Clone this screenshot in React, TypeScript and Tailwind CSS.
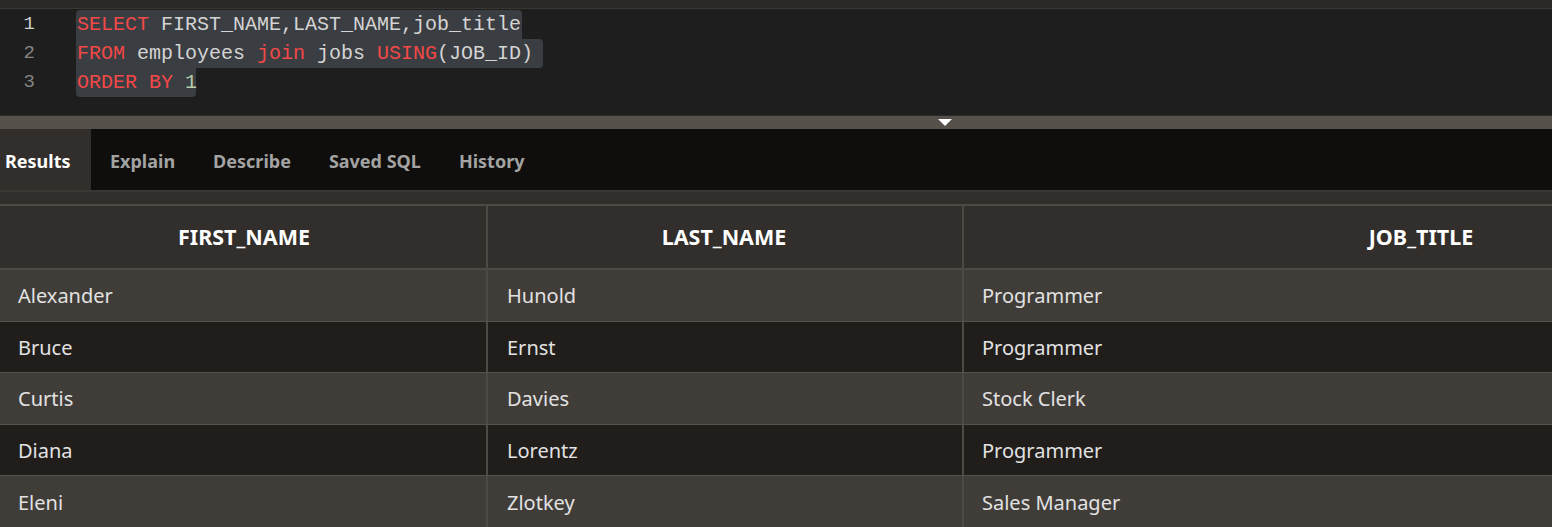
const rows = [
  ['Alexander', 'Hunold', 'Programmer'],
  ['Bruce', 'Ernst', 'Programmer'],
  ['Curtis', 'Davies', 'Stock Clerk'],
  ['Diana', 'Lorentz', 'Programmer'],
  ['Eleni', 'Zlotkey', 'Sales Manager'],
]

const kw = 'text-[#f34848]'
const id = 'text-[#d4d4d4]'

function CodeLine({ n, active, width, round, children }: { n: number; active?: boolean; width: string; round: string; children: React.ReactNode }) {
  return (
    <div className="flex h-[29px] items-stretch">
      <div className="w-[76px] shrink-0">
        <div className={`w-[35px] text-right text-[19px] leading-[29px] ${active ? 'text-[#cfcfcf]' : 'text-[#858585]'}`}>{n}</div>
      </div>
      <div className={`bg-[#3a3d41] pl-[1px] leading-[29px] whitespace-pre ${width} ${round}`}>{children}</div>
    </div>
  )
}

export default function App() {
  return (
    <div className="flex h-[527px] w-[1552px] flex-col overflow-hidden bg-[#1e1e1e] font-['Noto_Sans',sans-serif]">
      {/* top strip */}
      <div className="h-[9px] shrink-0 border-b border-[#3b3834] bg-[#2b2825]" />

      {/* editor */}
      <div className="h-[106px] shrink-0 bg-[#1e1e1e] pt-[1px] font-['Liberation_Mono',monospace] text-[20px]">
        <CodeLine n={1} active width="w-[446px]" round="rounded-t-[4px]">
          <span className={kw}>SELECT</span>
          <span className={id}> FIRST_NAME,LAST_NAME,job_title</span>
        </CodeLine>
        <CodeLine n={2} width="w-[467px]" round="rounded-tr-[4px] rounded-br-[4px]">
          <span className={kw}>FROM</span>
          <span className={id}> employees </span>
          <span className={kw}>join</span>
          <span className={id}> jobs </span>
          <span className={kw}>USING</span>
          <span className={id}>(JOB_ID)</span>
        </CodeLine>
        <CodeLine n={3} width="w-[120px]" round="rounded-b-[4px]">
          <span className={kw}>ORDER BY</span>
          <span className={id}> </span>
          <span className="text-[#b5cea8]">1</span>
        </CodeLine>
      </div>

      {/* splitter */}
      <div className="flex h-[14px] shrink-0 justify-center border-t border-[#2e2c29] bg-[#555049]">
        <div className="ml-[338px] mt-[3px] h-0 w-0 border-x-[7px] border-t-[7px] border-x-transparent border-t-white" />
      </div>

      {/* tabs */}
      <div className="flex h-[61px] shrink-0 items-stretch gap-[38px] bg-[#0f0e0d] text-[18px] font-bold">
        <div className="flex w-[91px] items-center bg-[#312e2b] pl-[5px] pt-[3px] text-white">Results</div>
        <div className="-ml-[19px] flex items-center pt-[3px] text-[#a3a3a3]">Explain</div>
        <div className="flex items-center pt-[3px] text-[#a3a3a3]">Describe</div>
        <div className="flex items-center pt-[3px] text-[#a3a3a3]">Saved SQL</div>
        <div className="flex items-center pt-[3px] text-[#a3a3a3]">History</div>
      </div>

      {/* results grid */}
      <div className="flex-1 overflow-hidden border-t-2 border-[#3a3733] bg-[#312e2b] pt-[12px]">
        <div className="w-[1878px] border-t-2 border-[#4d4944]">
          <div className="flex h-[64px] border-b-2 border-[#4d4944] bg-[#312e2b] text-[21.5px] font-bold text-white">
            <div className="flex w-[488px] items-center justify-center border-r-2 border-[#4d4944] pl-[2px]">FIRST_NAME</div>
            <div className="flex w-[476px] items-center justify-center border-r-2 border-[#4d4944] pr-[2px]">LAST_NAME</div>
            <div className="flex w-[914px] items-center justify-center">JOB_TITLE</div>
          </div>
          {rows.map((r, i) => (
            <div
              key={r[0]}
              className={`flex h-[51.6px] border-b border-[#55514b] text-[20px] text-[#e2e2e2] ${i % 2 === 0 ? 'bg-[#403d39]' : 'bg-[#201d1b]'}`}
            >
              <div className="flex w-[488px] items-center border-r-2 border-[#4d4944] pl-[18px] pt-[2px]">{r[0]}</div>
              <div className="flex w-[476px] items-center border-r-2 border-[#4d4944] pl-[19px] pt-[2px]">{r[1]}</div>
              <div className="flex w-[914px] items-center pl-[18px] pt-[2px]">{r[2]}</div>
            </div>
          ))}
        </div>
      </div>
    </div>
  )
}
